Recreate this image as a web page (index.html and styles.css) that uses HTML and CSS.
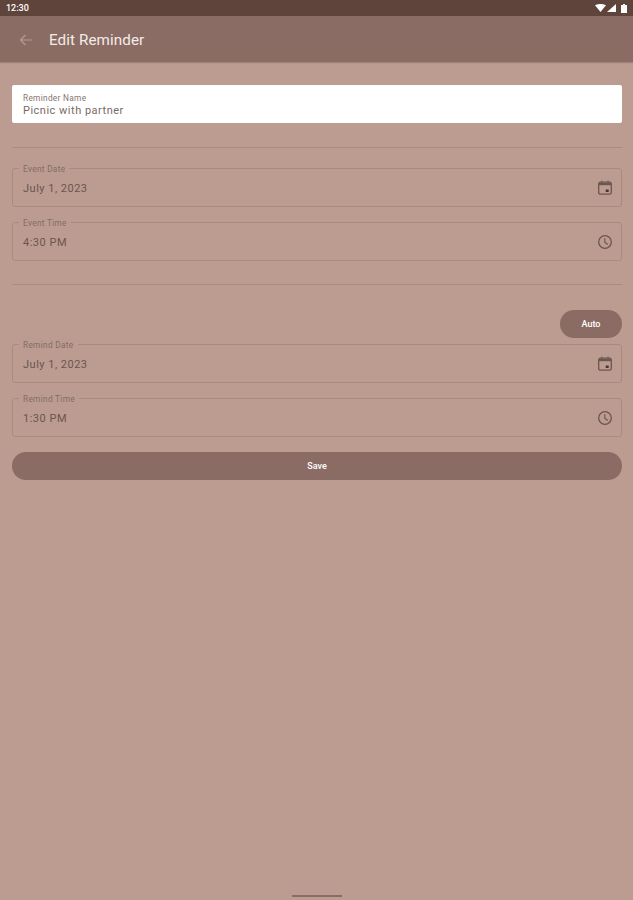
FILE: index.html
```html
<!DOCTYPE html>
<html lang="en">
<head>
<meta charset="utf-8">
<title>Edit Reminder</title>
<link rel="stylesheet" href="styles.css">
</head>
<body>
<div class="screen">
  <div class="status">
    <span class="clock">12:30</span>
    <span class="status-icons">
      <svg width="11" height="8" viewBox="0 0 11 8"><path d="M0 1.2C3.2-.4 7.800-.4 11 1.2L5.500 8z" fill="#fff"/></svg>
      <svg class="signal" width="9" height="8" viewBox="0 0 9 8"><path d="M9 0v8H0z" fill="#fff"/></svg>
      <svg class="battery" width="6" height="9" viewBox="0 0 6 9"><path d="M2 0h2v1h2v8H0V1h2z" fill="#fff"/></svg>
    </span>
  </div>
  <header class="appbar">
    <svg class="back" width="14" height="12" viewBox="0 0 14 12"><path d="M13 6H2M6.500 1 1.500 6l5 5" fill="none" stroke="#b59a92" stroke-width="1.200"/></svg>
    <h1 class="title">Edit Reminder</h1>
  </header>
  <main class="content">
    <div class="name-field">
      <span class="name-label">Reminder Name</span>
      <span class="name-value">Picnic with partner</span>
    </div>
    <hr class="rule rule-first">
    <div class="outlined">
      <span class="legend">Event Date</span>
      <span class="value">July 1, 2023</span>
      <svg class="icon" viewBox="0 0 16 16"><rect x="1.700" y="2.200" width="12.600" height="12" rx="1.800" fill="none" stroke="#6b5650" stroke-width="1.300"/><path d="M2 5.200h12V3H2z" fill="#6b5650"/><path d="M5 .8v2M11 .8v2" stroke="#6b5650" stroke-width="1.200"/><rect x="8.700" y="9.500" width="3" height="2.500" fill="#4a3632"/></svg>
    </div>
    <div class="outlined gap">
      <span class="legend">Event Time</span>
      <span class="value">4:30 PM</span>
      <svg class="icon" viewBox="0 0 16 16"><circle cx="8" cy="8" r="6.300" fill="none" stroke="#6b5650" stroke-width="1.300"/><path d="M7.800 4.300v4l3 2.200" fill="none" stroke="#6b5650" stroke-width="1.200"/></svg>
    </div>
    <hr class="rule rule-second">
    <div class="auto-row"><button class="auto">Auto</button></div>
    <div class="outlined">
      <span class="legend">Remind Date</span>
      <span class="value">July 1, 2023</span>
      <svg class="icon" viewBox="0 0 16 16"><rect x="1.700" y="2.200" width="12.600" height="12" rx="1.800" fill="none" stroke="#6b5650" stroke-width="1.300"/><path d="M2 5.200h12V3H2z" fill="#6b5650"/><path d="M5 .8v2M11 .8v2" stroke="#6b5650" stroke-width="1.200"/><rect x="8.700" y="9.500" width="3" height="2.500" fill="#4a3632"/></svg>
    </div>
    <div class="outlined gap">
      <span class="legend">Remind Time</span>
      <span class="value">1:30 PM</span>
      <svg class="icon" viewBox="0 0 16 16"><circle cx="8" cy="8" r="6.300" fill="none" stroke="#6b5650" stroke-width="1.300"/><path d="M7.800 4.300v4l3 2.200" fill="none" stroke="#6b5650" stroke-width="1.200"/></svg>
    </div>
    <button class="save">Save</button>
  </main>
  <div class="home-zone"><span class="home-bar"></span></div>
</div>
</body>
</html>
```
FILE: styles.css
```css
* { box-sizing: border-box; }
html, body { margin: 0; padding: 0; }
body { font-family: Roboto, "Liberation Sans", sans-serif; background: #bc9c90; }
.screen { width: 633px; height: 900px; display: flex; flex-direction: column; background: #bc9c90; overflow: hidden; }
.status { height: 16px; flex: none; background: #5f443c; display: flex; align-items: center; justify-content: space-between; padding: 0 6px 0 6px; color: #fff; }
.clock { font-size: 9px; font-weight: 500; line-height: 16px; }
.status-icons { display: flex; align-items: center; }
.signal { margin-left: 1px; }
.battery { margin-left: 5px; }
.appbar { height: 46px; flex: none; background: #8a6c65; display: flex; align-items: center; padding: 2px 0 0 19px; box-shadow: 0 1px 1px rgba(80, 55, 48, .25); }
.back { flex: none; }
.title { margin: 0 0 0 16px; font-size: 15.200px; font-weight: 400; color: #f4ebe6; letter-spacing: .1px; }
.content { flex: 1; display: flex; flex-direction: column; padding: 23px 11px 0 12px; }
.name-field { height: 38px; background: #fff; border-radius: 2px; padding: 8px 11px 0; display: flex; flex-direction: column; }
.name-label { font-size: 8.300px; line-height: 10px; color: #85746f; letter-spacing: .3px; }
.name-value { font-size: 11px; line-height: 16px; color: #7a6a65; letter-spacing: .5px; }
.rule { height: 1px; margin: 0; border: 0; background: #a98b80; flex: none; }
.rule-first { margin-top: 24px; margin-bottom: 20px; }
.rule-second { margin-top: 23px; margin-bottom: 25px; }
.outlined { position: relative; height: 39px; flex: none; border: 1px solid #a98a7f; border-radius: 3px; display: flex; align-items: center; justify-content: space-between; padding: 1px 8px 0 10px; }
.gap { margin-top: 15px; }
.legend { position: absolute; left: 6px; top: -4px; padding: 0 4px; background: #bc9c90; font-size: 8.300px; line-height: 9px; color: #826c65; letter-spacing: .3px; }
.value { font-size: 11px; color: #6a554f; letter-spacing: .5px; }
.icon { width: 16px; height: 16px; flex: none; }
.auto-row { display: flex; justify-content: flex-end; margin-bottom: 6px; }
.auto { width: 62px; height: 28px; border: 0; border-radius: 14px; background: #8a6c65; color: #fff; font: 500 9px Roboto, "Liberation Sans", sans-serif; padding: 0; }
.save { height: 28px; margin-top: 15px; border: 0; border-radius: 14px; background: #8a6c65; color: #fff; font: 500 9px Roboto, "Liberation Sans", sans-serif; padding: 0; flex: none; }
.home-zone { height: 5px; flex: none; display: flex; justify-content: center; }
.home-bar { width: 50px; height: 2px; background: #8a6c65; }
```
